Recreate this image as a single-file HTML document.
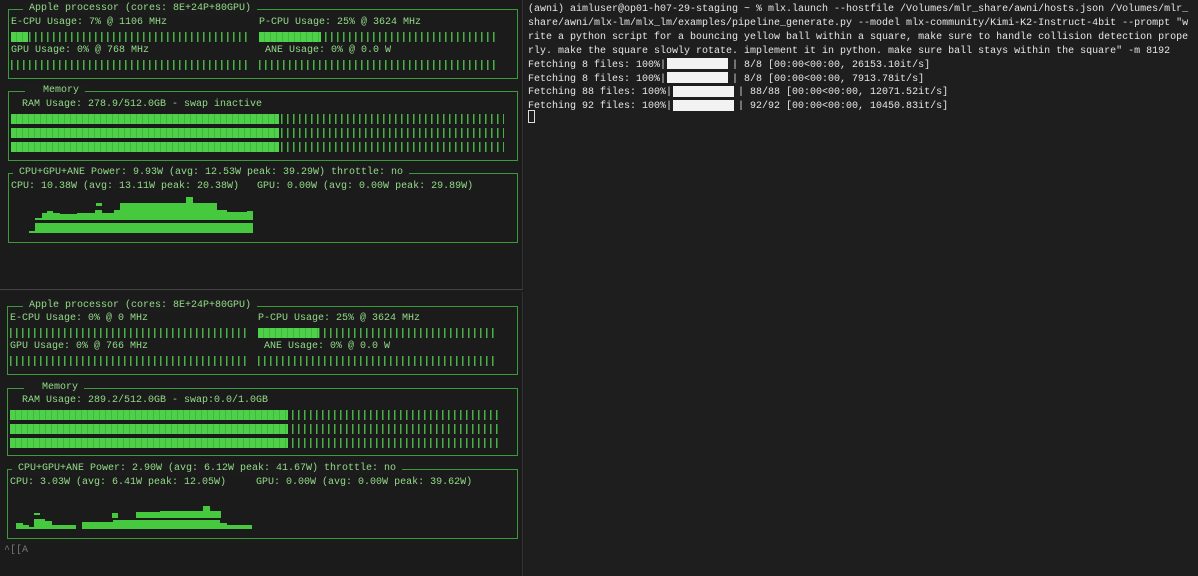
<!DOCTYPE html>
<html><head><meta charset="utf-8"><style>
*{margin:0;padding:0;box-sizing:border-box}
body{width:1198px;height:576px;background:#1c1c1c;overflow:hidden;position:relative;font-family:"Liberation Mono",monospace;font-size:10px;color:#93da88}
.t{position:absolute;white-space:pre;line-height:12px}
.w{color:#e6e6e6}
.box{position:absolute;border:1.5px solid #3c9a3c}
.ttl{position:absolute;background:#1c1c1c;padding:0 6px;white-space:pre;line-height:12px;top:-7px}
.bar{position:absolute;height:10px;background:repeating-linear-gradient(90deg,#48b044 0 1.5px,transparent 1.5px 6px)}
.fill{position:absolute;height:10px;background:repeating-linear-gradient(90deg,#4fd04a 0 5px,#3fb83b 5px 6px)}
</style></head><body>
<div style="position:absolute;left:0;top:0;width:523px;height:290px;background:#1b1b1b;border-right:1px solid #333;border-bottom:1px solid #444"></div>
<div style="position:absolute;left:0;top:292px;width:523px;height:284px;background:#1b1b1b;border-right:1px solid #333"></div>
<div style="position:absolute;left:524px;top:0;width:674px;height:576px;background:#1e1e1e"></div>

<!-- TOP PANE -->
<div class="box" style="left:8px;top:9px;width:510px;height:70px"><div class="ttl" style="left:14px">Apple processor (cores: 8E+24P+80GPU)</div></div>
<div class="t" style="left:11px;top:17px">E-CPU Usage: 7% @ 1106 MHz</div>
<div class="t" style="left:259px;top:17px">P-CPU Usage: 25% @ 3624 MHz</div>
<div class="bar" style="left:11px;top:32px;width:238px"></div><div class="fill" style="left:11px;top:32px;width:17px"></div>
<div class="bar" style="left:259px;top:32px;width:240px"></div><div class="fill" style="left:259px;top:32px;width:62px"></div>
<div class="t" style="left:11px;top:45px">GPU Usage: 0% @ 768 MHz</div>
<div class="t" style="left:265px;top:45px">ANE Usage: 0% @ 0.0 W</div>
<div class="bar" style="left:11px;top:60px;width:238px"></div>
<div class="bar" style="left:259px;top:60px;width:240px"></div>

<div class="box" style="left:8px;top:91px;width:510px;height:70px"><div class="ttl" style="left:16px">  Memory</div></div>
<div class="t" style="left:22px;top:99px">RAM Usage: 278.9/512.0GB - swap inactive</div>
<div class="bar" style="left:11px;top:114px;width:493px"></div><div class="fill" style="left:11px;top:114px;width:268px"></div>
<div class="bar" style="left:11px;top:128px;width:493px"></div><div class="fill" style="left:11px;top:128px;width:268px"></div>
<div class="bar" style="left:11px;top:142px;width:493px"></div><div class="fill" style="left:11px;top:142px;width:268px"></div>

<div class="box" style="left:8px;top:173px;width:510px;height:70px"><div class="ttl" style="left:4px">CPU+GPU+ANE Power: 9.93W (avg: 12.53W peak: 39.29W) throttle: no</div></div>
<div class="t" style="left:11px;top:181px">CPU: 10.38W (avg: 13.11W peak: 20.38W)   GPU: 0.00W (avg: 0.00W peak: 29.89W)</div>
<svg style="position:absolute;left:0;top:0" width="523" height="290">
<g fill="#46c83f">
<path d="M35 220V218H42V213H47V211H53V213H60V214H77V213H95V210H102V213H114V210H120V207H150V206H186V197H193V206H217V210H227V212H247V211H253V220Z"/>
<rect x="96" y="203" width="6" height="3"/>
<rect x="120" y="203" width="97" height="4"/>
<path d="M29 233V231H35V223H253V233Z"/>
</g></svg>

<!-- BOTTOM PANE -->
<div class="box" style="left:7px;top:306px;width:511px;height:69px"><div class="ttl" style="left:15px">Apple processor (cores: 8E+24P+80GPU)</div></div>
<div class="t" style="left:10px;top:313px">E-CPU Usage: 0% @ 0 MHz</div>
<div class="t" style="left:258px;top:313px">P-CPU Usage: 25% @ 3624 MHz</div>
<div class="bar" style="left:10px;top:328px;width:238px"></div>
<div class="bar" style="left:258px;top:328px;width:240px"></div><div class="fill" style="left:258px;top:328px;width:61px"></div>
<div class="t" style="left:10px;top:341px">GPU Usage: 0% @ 766 MHz</div>
<div class="t" style="left:264px;top:341px">ANE Usage: 0% @ 0.0 W</div>
<div class="bar" style="left:10px;top:356px;width:238px"></div>
<div class="bar" style="left:258px;top:356px;width:240px"></div>

<div class="box" style="left:7px;top:388px;width:511px;height:68px"><div class="ttl" style="left:16px">  Memory</div></div>
<div class="t" style="left:22px;top:395px">RAM Usage: 289.2/512.0GB - swap:0.0/1.0GB</div>
<div class="bar" style="left:10px;top:410px;width:491px"></div><div class="fill" style="left:10px;top:410px;width:278px"></div>
<div class="bar" style="left:10px;top:424px;width:491px"></div><div class="fill" style="left:10px;top:424px;width:278px"></div>
<div class="bar" style="left:10px;top:438px;width:491px"></div><div class="fill" style="left:10px;top:438px;width:278px"></div>

<div class="box" style="left:7px;top:469px;width:511px;height:70px"><div class="ttl" style="left:4px">CPU+GPU+ANE Power: 2.90W (avg: 6.12W peak: 41.67W) throttle: no</div></div>
<div class="t" style="left:10px;top:477px">CPU: 3.03W (avg: 6.41W peak: 12.05W)     GPU: 0.00W (avg: 0.00W peak: 39.62W)</div>
<svg style="position:absolute;left:0;top:292px" width="523" height="284">
<g fill="#46c83f">
<path d="M16 237V231H23V233H29V235H34V227H45V229H52V233H76V237Z"/>
<rect x="34" y="221" width="6" height="2"/>
<path d="M82 237V230H113V228H136V228H220V231H227V233H252V237Z"/>
<rect x="112" y="221" width="6" height="5"/>
<path d="M136 226V220H160V219H203V214H210V219H221V226Z"/>
</g></svg>
<div class="t" style="left:4px;top:545px;color:#777">^[[A</div>

<!-- RIGHT TERMINAL -->
<div class="t w" style="left:528px;top:3px;line-height:13.9px">(awni) aimluser@op01-h07-29-staging ~ % mlx.launch --hostfile /Volumes/mlr_share/awni/hosts.json /Volumes/mlr_
share/awni/mlx-lm/mlx_lm/examples/pipeline_generate.py --model mlx-community/Kimi-K2-Instruct-4bit --prompt "w
rite a python script for a bouncing yellow ball within a square, make sure to handle collision detection prope
rly. make the square slowly rotate. implement it in python. make sure ball stays within the square" -m 8192
Fetching 8 files: 100%|           | 8/8 [00:00&lt;00:00, 26153.10it/s]
Fetching 8 files: 100%|           | 8/8 [00:00&lt;00:00, 7913.78it/s]
Fetching 88 files: 100%|           | 88/88 [00:00&lt;00:00, 12071.52it/s]
Fetching 92 files: 100%|           | 92/92 [00:00&lt;00:00, 10450.83it/s]</div>
<div style="position:absolute;left:667px;top:58px;width:61px;height:11px;background:#f2f2f2"></div>
<div style="position:absolute;left:667px;top:72px;width:61px;height:11px;background:#f2f2f2"></div>
<div style="position:absolute;left:673px;top:86px;width:61px;height:11px;background:#f2f2f2"></div>
<div style="position:absolute;left:673px;top:100px;width:61px;height:11px;background:#f2f2f2"></div>
<div style="position:absolute;left:528px;top:110px;width:7px;height:13px;border:1px solid #ddd"></div>
</body></html>
